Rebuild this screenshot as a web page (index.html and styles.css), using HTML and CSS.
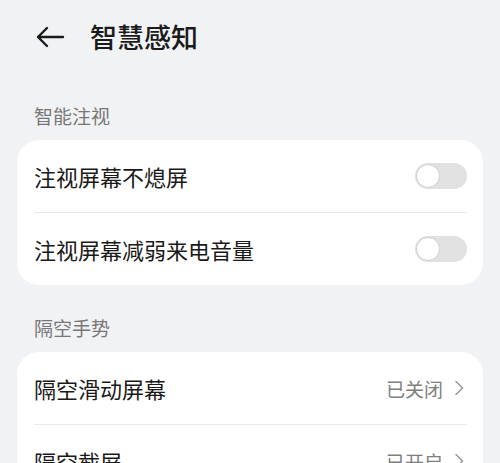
FILE: index.html
```html
<!DOCTYPE html>
<html>
  <head>
    <title>智慧感知</title>
    <link rel="stylesheet" href="styles.css">
  </head>
  <body>
    <div class="header">
      <svg class="back" width="30" height="22" viewBox="0 0 30 22">
        <path d="M28 11H3M12 2L3 11l9 9" fill="none" stroke="#1a1a1a" stroke-width="2.4" stroke-linecap="round" stroke-linejoin="round"/>
      </svg>
      <h1>智慧感知</h1>
    </div>

    <div class="section-label">智能注视</div>
    <div class="card">
      <div class="row">
        <span class="row-title">注视屏幕不熄屏</span>
        <span class="switch"><span class="knob"></span></span>
      </div>
      <div class="row">
        <span class="row-title">注视屏幕减弱来电音量</span>
        <span class="switch"><span class="knob"></span></span>
      </div>
    </div>

    <div class="section-label">隔空手势</div>
    <div class="card">
      <div class="row">
        <span class="row-title">隔空滑动屏幕</span>
        <span class="row-value">已关闭
          <svg class="chevron" width="10" height="16" viewBox="0 0 10 16">
            <path d="M2 1.5L8.5 8 2 14.5" fill="none" stroke="#9a9a9a" stroke-width="1.6" stroke-linecap="round" stroke-linejoin="round"/>
          </svg>
        </span>
      </div>
      <div class="row">
        <span class="row-title">隔空截屏</span>
        <span class="row-value">已开启
          <svg class="chevron" width="10" height="16" viewBox="0 0 10 16">
            <path d="M2 1.5L8.5 8 2 14.5" fill="none" stroke="#9a9a9a" stroke-width="1.6" stroke-linecap="round" stroke-linejoin="round"/>
          </svg>
        </span>
      </div>
    </div>
  </body>
</html>
```

FILE: styles.css
```css
body {
  margin: 0;
  background-color: #f1f2f4;
  font-family: "Noto Sans CJK SC", "Noto Sans", sans-serif;
  color: #1a1a1a;
}

.header {
  height: 73px;
  display: flex;
  align-items: center;
  padding-left: 35px;
}

.back {
  display: block;
  margin-right: 25px;
}

h1 {
  margin: 0;
  font-size: 27px;
  font-weight: 500;
  line-height: 1;
}

.section-label {
  padding: 31px 34px 12px;
  font-size: 19px;
  line-height: 24px;
  color: #777;
}

.card {
  margin: 0 17px;
  background-color: #fff;
  border-radius: 22px;
  padding: 0 16px 0 17px;
}

.row {
  height: 72px;
  display: flex;
  align-items: center;
  justify-content: space-between;
}

.row + .row {
  border-top: 1.5px solid #e9e9e9;
}

.row-title {
  font-size: 22px;
}

.switch {
  width: 52px;
  height: 26px;
  border-radius: 13px;
  background-color: #e1e1e1;
  display: flex;
  align-items: center;
  padding: 0 1px;
  box-sizing: border-box;
}

.knob {
  width: 24px;
  height: 24px;
  border-radius: 50%;
  background-color: #fff;
  border: 1.5px solid #cfcfcf;
  box-sizing: border-box;
}

.row-value {
  display: flex;
  align-items: center;
  gap: 11px;
  margin-right: 3px;
  font-size: 19px;
  color: #7f7f7f;
}

.chevron {
  display: block;
}
```
